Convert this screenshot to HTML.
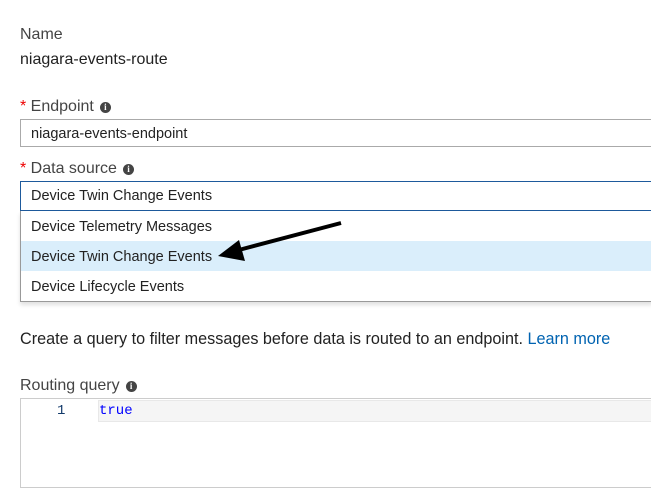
<html><head><style>
body{margin:0;width:651px;height:472px;background:#fff;font-family:"Liberation Sans",sans-serif;color:#222;position:relative;overflow:hidden}
.t{position:absolute;font-size:14.5px;white-space:nowrap}
.b{font-size:16px}
.lbl{color:#444}
.star{color:#e00}
.i{display:inline-block;width:11px;height:11px;border-radius:50%;background:#444;color:#fff;font-size:9px;font-weight:bold;text-align:center;line-height:11px;vertical-align:1px;margin-left:6px;font-family:"Liberation Serif",serif}
.box{position:absolute;left:20px;right:-2px;border:1px solid #aaa;box-sizing:border-box}
</style></head><body>
<div class="t b lbl" style="left:20px;top:26px">Name</div>
<div class="t b" style="left:20px;top:51px">niagara-events-route</div>
<div class="t b lbl" style="left:20px;top:98px"><span class="star">*</span> Endpoint<span class="i">i</span></div>
<div class="box" style="top:119px;height:28px"></div>
<div class="t" style="left:31px;top:126px">niagara-events-endpoint</div>
<div class="t b lbl" style="left:20px;top:160px"><span class="star">*</span> Data source<span class="i">i</span></div>
<div class="box" style="top:181px;height:30px;border-color:#1e5a9c"></div>
<div class="t" style="left:31px;top:188px">Device Twin Change Events</div>
<div class="box" style="top:211px;height:91px;border-top:none;border-color:#999;box-shadow:0 3px 4px rgba(0,0,0,.12)"></div>
<div style="position:absolute;left:21px;right:0;top:241px;height:30px;background:#daeefb"></div>
<div class="t" style="left:31px;top:219px">Device Telemetry Messages</div>
<div class="t" style="left:31px;top:249px">Device Twin Change Events</div>
<div class="t" style="left:31px;top:279px">Device Lifecycle Events</div>
<svg style="position:absolute;left:0;top:0" width="651" height="472"><line x1="341" y1="223" x2="235" y2="251" stroke="#000" stroke-width="4"/><polygon points="218,256 239,240 245,261" fill="#000"/></svg>
<div class="t b" style="left:20px;top:330px;font-size:16.2px">Create a query to filter messages before data is routed to an endpoint. <span style="color:#0063b1">Learn more</span></div>
<div class="t b lbl" style="left:20px;top:377px">Routing query<span class="i">i</span></div>
<div class="box" style="top:398px;height:90px;border-color:#ccc"></div>
<div style="position:absolute;left:98px;right:0;top:400px;height:20px;background:#f5f5f5;border:1px solid #e8e8e8;border-right:none"></div>
<div class="t" style="left:57px;top:403px;font-family:'Liberation Mono',monospace;color:#123a6a;font-size:14px">1</div>
<div class="t" style="left:99px;top:403px;font-family:'Liberation Mono',monospace;color:#0000ff;font-size:14px">true</div>
</body></html>
